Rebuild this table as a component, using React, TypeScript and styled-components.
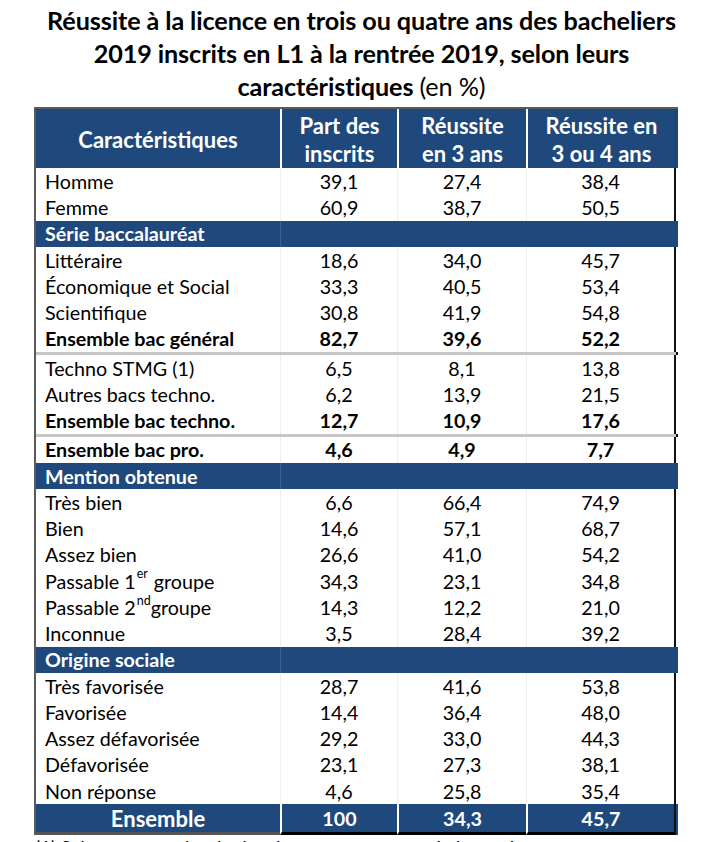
import React from 'react';
import styled, { createGlobalStyle, css } from 'styled-components';

const BLUE = '#1f497d';

const GlobalStyle = createGlobalStyle`
  html, body { margin: 0; padding: 0; background: #ffffff; }
  body { font-family: Lato, "Open Sans", "Liberation Sans", sans-serif; color: #000; }
`;

const Page = styled.div`
  width: 723px;
  height: 842px;
  overflow: hidden;
  padding-top: 4px;
  box-sizing: border-box;
`;

const Title = styled.h1`
  margin: 0;
  text-align: center;
  font-size: 25.2px;
  font-weight: 700;
  line-height: 33px;
  letter-spacing: -0.1px;
  color: #000;
`;

const Light = styled.span`
  font-weight: 400;
`;

const Table = styled.div`
  margin: 4px 0 0 34px;
  width: 642px;
  border-left: 2px solid #5a5a5a;
  display: flex;
  flex-direction: column;
`;

const COLS = '244px 117px 129px 150px';

const HeaderRow = styled.div`
  display: grid;
  grid-template-columns: ${COLS};
  height: 61px;
  background: ${BLUE};
  border-top: 2px solid #5a5a5a;
  box-sizing: border-box;
`;

const HeaderCell = styled.div<{ $first?: boolean; $last?: boolean }>`
  display: flex;
  align-items: center;
  justify-content: center;
  text-align: center;
  color: #fff;
  font-weight: 700;
  font-size: 22px;
  line-height: 28px;
  padding-top: 2px;
  box-sizing: border-box;
  ${(p) => !p.$first && css`border-left: 2px solid #fff;`}
  ${(p) => p.$last && css`border-right: 1px solid #3a3a3a;`}
`;

type Kind = 'data' | 'bold' | 'section' | 'total';

const Row = styled.div<{ $kind: Kind }>`
  display: grid;
  grid-template-columns: ${COLS};
  height: ${(p) => (p.$kind === 'total' ? '31px' : '26.25px')};
  background: ${(p) => (p.$kind === 'section' || p.$kind === 'total' ? BLUE : '#fff')};
  box-sizing: border-box;
`;

const Cell = styled.div<{ $kind: Kind; $col: number }>`
  display: flex;
  align-items: center;
  box-sizing: border-box;
  white-space: nowrap;
  font-size: 19.7px;
  line-height: 1;
  padding-top: 1px;
  justify-content: ${(p) => (p.$col === 0 && p.$kind !== 'total' ? 'flex-start' : 'center')};
  padding-left: ${(p) => (p.$col === 0 && p.$kind !== 'total' ? '9px' : '0')};
  font-weight: ${(p) => (p.$kind === 'data' ? 400 : 700)};
  color: ${(p) => (p.$kind === 'section' || p.$kind === 'total' ? '#fff' : '#000')};

  ${(p) =>
    (p.$kind === 'data' || p.$kind === 'bold') &&
    css`
      ${p.$col > 0 && css`border-left: 1px solid #efefef;`}
      ${p.$col === 3 && css`border-right: 2px solid #111;`}
    `}

  ${(p) =>
    p.$kind === 'section' &&
    p.$col === 1 &&
    css`border-left: 1px solid rgba(255, 255, 255, 0.14);`}

  ${(p) =>
    p.$kind === 'total' &&
    css`
      border-bottom: 3px solid ${p.$col === 0 ? '#555' : '#000'};
      ${p.$col > 0 && css`border-left: 2px solid #fff;`}
      ${p.$col === 3 && css`border-right: 2px solid #111;`}
      ${p.$col === 0 && css`font-size: 22px; padding-top: 2px;`}
    `}
`;

const Rule = styled.div`
  height: 3px;
  background: #c6c6c6;
  border-right: 2px solid #111;
`;

const Sup = styled.span`
  font-size: 12.5px;
  line-height: 0;
  position: relative;
  top: -7px;
  margin-left: 1px;
`;

const Gap = styled.span`
  display: inline-block;
  width: 6px;
`;

const Footnote = styled.p`
  margin: 1px 0 0 35px;
  font-size: 19px;
  line-height: 24px;
`;

type Line =
  | { kind: 'data' | 'bold' | 'total'; label: React.ReactNode; values: [string, string, string] }
  | { kind: 'section'; label: string }
  | { kind: 'rule' };

const lines: Line[] = [
  { kind: 'data', label: 'Homme', values: ['39,1', '27,4', '38,4'] },
  { kind: 'data', label: 'Femme', values: ['60,9', '38,7', '50,5'] },
  { kind: 'section', label: 'Série baccalauréat' },
  { kind: 'data', label: 'Littéraire', values: ['18,6', '34,0', '45,7'] },
  { kind: 'data', label: 'Économique et Social', values: ['33,3', '40,5', '53,4'] },
  { kind: 'data', label: 'Scientifique', values: ['30,8', '41,9', '54,8'] },
  { kind: 'bold', label: 'Ensemble bac général', values: ['82,7', '39,6', '52,2'] },
  { kind: 'rule' },
  { kind: 'data', label: 'Techno STMG (1)', values: ['6,5', '8,1', '13,8'] },
  { kind: 'data', label: 'Autres bacs techno.', values: ['6,2', '13,9', '21,5'] },
  { kind: 'bold', label: 'Ensemble bac techno.', values: ['12,7', '10,9', '17,6'] },
  { kind: 'rule' },
  { kind: 'bold', label: 'Ensemble bac pro.', values: ['4,6', '4,9', '7,7'] },
  { kind: 'section', label: 'Mention obtenue' },
  { kind: 'data', label: 'Très bien', values: ['6,6', '66,4', '74,9'] },
  { kind: 'data', label: 'Bien', values: ['14,6', '57,1', '68,7'] },
  { kind: 'data', label: 'Assez bien', values: ['26,6', '41,0', '54,2'] },
  {
    kind: 'data',
    label: (
      <>
        Passable 1<Sup>er</Sup>
        <Gap />
        groupe
      </>
    ),
    values: ['34,3', '23,1', '34,8'],
  },
  {
    kind: 'data',
    label: (
      <>
        Passable 2<Sup>nd</Sup>groupe
      </>
    ),
    values: ['14,3', '12,2', '21,0'],
  },
  { kind: 'data', label: 'Inconnue', values: ['3,5', '28,4', '39,2'] },
  { kind: 'section', label: 'Origine sociale' },
  { kind: 'data', label: 'Très favorisée', values: ['28,7', '41,6', '53,8'] },
  { kind: 'data', label: 'Favorisée', values: ['14,4', '36,4', '48,0'] },
  { kind: 'data', label: 'Assez défavorisée', values: ['29,2', '33,0', '44,3'] },
  { kind: 'data', label: 'Défavorisée', values: ['23,1', '27,3', '38,1'] },
  { kind: 'data', label: 'Non réponse', values: ['4,6', '25,8', '35,4'] },
  { kind: 'total', label: 'Ensemble', values: ['100', '34,3', '45,7'] },
];

export default function App() {
  return (
    <Page>
      <GlobalStyle />
      <Title>
        Réussite à la licence en trois ou quatre ans des bacheliers
        <br />
        2019 inscrits en L1 à la rentrée 2019, selon leurs
        <br />
        caractéristiques <Light>(en %)</Light>
      </Title>
      <Table>
        <HeaderRow>
          <HeaderCell $first>Caractéristiques</HeaderCell>
          <HeaderCell>
            Part des
            <br />
            inscrits
          </HeaderCell>
          <HeaderCell>
            Réussite
            <br />
            en 3 ans
          </HeaderCell>
          <HeaderCell $last>
            Réussite en
            <br />3 ou 4 ans
          </HeaderCell>
        </HeaderRow>
        {lines.map((line, i) => {
          if (line.kind === 'rule') return <Rule key={i} />;
          if (line.kind === 'section')
            return (
              <Row key={i} $kind="section">
                <Cell $kind="section" $col={0}>
                  {line.label}
                </Cell>
                <Cell $kind="section" $col={1} />
                <Cell $kind="section" $col={2} />
                <Cell $kind="section" $col={3} />
              </Row>
            );
          return (
            <Row key={i} $kind={line.kind}>
              <Cell $kind={line.kind} $col={0}>
                {line.label}
              </Cell>
              {line.values.map((v, j) => (
                <Cell key={j} $kind={line.kind} $col={j + 1}>
                  {v}
                </Cell>
              ))}
            </Row>
          );
        })}
      </Table>
      <Footnote>(1) Sciences et technologies du management et de la gestion.</Footnote>
    </Page>
  );
}
